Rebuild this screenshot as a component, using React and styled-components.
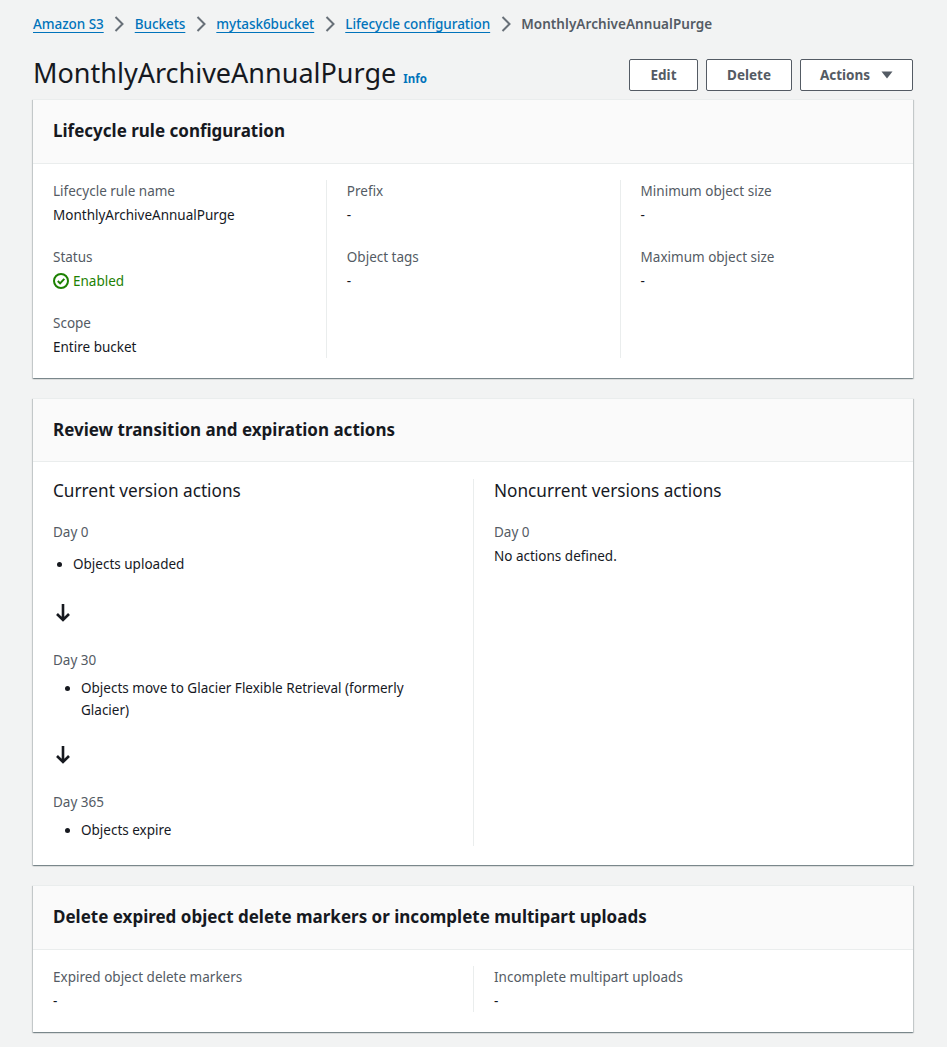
import React from 'react';
import styled, { createGlobalStyle } from 'styled-components';

const GlobalStyle = createGlobalStyle`
    * {
        box-sizing: border-box;
    }
    body {
        margin: 0;
        background: #f2f3f3;
        color: #16191f;
        font-family: "Noto Sans", "Open Sans", sans-serif;
        font-size: 13.5px;
        line-height: 22px;
    }
`;

const Chevron = () => (
    <ChevronIcon width="10" height="16" viewBox="0 0 10 16" fill="none">
        <path d="M1.5 1l7 7-7 7" stroke="#687078" strokeWidth="2" />
    </ChevronIcon>
);

const ArrowDown = () => (
    <ArrowIcon width="16" height="18" viewBox="0 0 16 18" fill="none">
        <path d="M8 0v16M2 10l6 6 6-6" stroke="#16191f" strokeWidth="2.6" />
    </ArrowIcon>
);

const CheckCircle = () => (
    <svg width="16" height="16" viewBox="0 0 16 16" fill="none">
        <circle cx="8" cy="8" r="7" stroke="#1d8102" strokeWidth="2" />
        <path d="M4.8 8l2.3 2.4 4.2-4.6" stroke="#1d8102" strokeWidth="2" />
    </svg>
);

const Field = ({ label, children }) => (
    <div>
        <Label>{label}</Label>
        <Value>{children}</Value>
    </div>
);

const App = () => {
    return (
        <Page>
            <GlobalStyle />
            <Breadcrumbs>
                <Crumb href="#">Amazon S3</Crumb>
                <Chevron />
                <Crumb href="#">Buckets</Crumb>
                <Chevron />
                <Crumb href="#">mytask6bucket</Crumb>
                <Chevron />
                <Crumb href="#">Lifecycle configuration</Crumb>
                <Chevron />
                <CurrentCrumb>MonthlyArchiveAnnualPurge</CurrentCrumb>
            </Breadcrumbs>

            <PageHeader>
                <TitleRow>
                    <Title>MonthlyArchiveAnnualPurge</Title>
                    <InfoLink href="#">Info</InfoLink>
                </TitleRow>
                <Actions>
                    <Button $width={69}>Edit</Button>
                    <Button $width={86}>Delete</Button>
                    <Button $width={113}>
                        Actions
                        <Caret width="12" height="8" viewBox="0 0 12 8">
                            <path d="M0.5 0.5h11L6 7.5z" fill="#545b64" />
                        </Caret>
                    </Button>
                </Actions>
            </PageHeader>

            <Card>
                <CardHeader>
                    <CardTitle>Lifecycle rule configuration</CardTitle>
                </CardHeader>
                <ThreeColumns>
                    <Column $divider>
                        <Field label="Lifecycle rule name">MonthlyArchiveAnnualPurge</Field>
                        <Field label="Status">
                            <StatusOk>
                                <CheckCircle />
                                Enabled
                            </StatusOk>
                        </Field>
                        <Field label="Scope">Entire bucket</Field>
                    </Column>
                    <Column $divider>
                        <Field label="Prefix">-</Field>
                        <Field label="Object tags">-</Field>
                    </Column>
                    <Column>
                        <Field label="Minimum object size">-</Field>
                        <Field label="Maximum object size">-</Field>
                    </Column>
                </ThreeColumns>
            </Card>

            <Card>
                <CardHeader $short>
                    <CardTitle>Review transition and expiration actions</CardTitle>
                </CardHeader>
                <TwoColumns $top={17} $bottom={19}>
                    <SplitColumn $divider>
                        <SectionTitle>Current version actions</SectionTitle>
                        <Label>Day 0</Label>
                        <ActionList $indent={20} $top={10} $bottom={29}>
                            <li>Objects uploaded</li>
                        </ActionList>
                        <ArrowDown />
                        <Label>Day 30</Label>
                        <ActionList $indent={28} $top={6}>
                            <li>Objects move to Glacier Flexible Retrieval (formerly Glacier)</li>
                        </ActionList>
                        <ArrowDown />
                        <Label>Day 365</Label>
                        <ActionList $indent={28} $top={6} $bottom={5}>
                            <li>Objects expire</li>
                        </ActionList>
                    </SplitColumn>
                    <SplitColumn $second>
                        <SectionTitle>Noncurrent versions actions</SectionTitle>
                        <Label>Day 0</Label>
                        <Value>No actions defined.</Value>
                    </SplitColumn>
                </TwoColumns>
            </Card>

            <Card>
                <CardHeader>
                    <CardTitle>Delete expired object delete markers or incomplete multipart uploads</CardTitle>
                </CardHeader>
                <TwoColumns $top={16} $bottom={20}>
                    <SplitColumn $divider>
                        <Label>Expired object delete markers</Label>
                        <Value>-</Value>
                    </SplitColumn>
                    <SplitColumn $second>
                        <Label>Incomplete multipart uploads</Label>
                        <Value>-</Value>
                    </SplitColumn>
                </TwoColumns>
            </Card>
        </Page>
    );
};

const Page = styled.div`
    padding: 13px 34px 15px 33px;
`;

const Breadcrumbs = styled.nav`
    display: flex;
    align-items: center;
    height: 22px;
`;

const Crumb = styled.a`
    color: #0073bb;
    font-weight: 500;
    letter-spacing: -0.05px;
    text-decoration: underline;
    text-underline-offset: 3px;
`;

const CurrentCrumb = styled.span`
    color: #545b64;
    font-weight: 600;
    letter-spacing: 0.06px;
`;

const ChevronIcon = styled.svg`
    margin: 0 10.5px;
    flex: none;
`;

const PageHeader = styled.header`
    display: flex;
    justify-content: space-between;
    align-items: flex-start;
    height: 32px;
    margin-top: 24px;
    margin-bottom: 8px;
`;

const TitleRow = styled.div`
    display: flex;
    align-items: baseline;
    gap: 7px;
`;

const Title = styled.h1`
    margin: 0;
    font-size: 27px;
    line-height: 28px;
    font-weight: 400;
    color: #16191f;
`;

const InfoLink = styled.a`
    color: #0073bb;
    font-size: 11.5px;
    font-weight: 700;
    text-decoration: none;
`;

const Actions = styled.div`
    display: flex;
    gap: 8px;
`;

const Button = styled.button`
    display: flex;
    align-items: center;
    justify-content: center;
    gap: 11px;
    width: ${(props) => props.$width}px;
    height: 32px;
    padding: 0;
    border: 1px solid #545b64;
    border-radius: 2px;
    background: #fff;
    color: #545b64;
    font-family: inherit;
    font-size: 13.5px;
    font-weight: 700;
    cursor: pointer;
`;

const Caret = styled.svg`
    flex: none;
`;

const Card = styled.section`
    background: #fff;
    margin-bottom: 20px;
    box-shadow: 0 1px 1px 0 rgba(0, 28, 36, 0.3), 1px 1px 1px 0 rgba(0, 28, 36, 0.15), -1px 1px 1px 0 rgba(0, 28, 36, 0.15);
    border-top: 1px solid #eaeded;

    &:last-child {
        margin-bottom: 0;
    }
`;

const CardHeader = styled.div`
    display: flex;
    align-items: center;
    height: ${(props) => (props.$short ? 63 : 64)}px;
    padding: 0 20px ${(props) => (props.$short ? 0 : 2)}px;
    background: #fafafa;
    border-bottom: 1px solid #eaeded;
`;

const CardTitle = styled.h2`
    margin: 0;
    font-size: 17px;
    line-height: 22px;
    font-weight: 700;
    color: #16191f;
`;

const ThreeColumns = styled.div`
    display: grid;
    grid-template-columns: 273.8px 273.8px 1fr;
    column-gap: 20px;
    padding: 16px 0 20px 20px;
`;

const Column = styled.div`
    display: flex;
    flex-direction: column;
    gap: 20px;
    border-right: ${(props) => (props.$divider ? '1px solid #eaeded' : 'none')};
`;

const TwoColumns = styled.div`
    display: grid;
    grid-template-columns: 421px 1fr;
    padding: ${(props) => props.$top}px 20px ${(props) => props.$bottom}px;
`;

const SplitColumn = styled.div`
    border-right: ${(props) => (props.$divider ? '1px solid #eaeded' : 'none')};
    padding-left: ${(props) => (props.$second ? 20 : 0)}px;
    padding-right: 20px;
`;

const SectionTitle = styled.h3`
    margin: 1px 0 19px;
    font-size: 17.2px;
    line-height: 22px;
    font-weight: 400;
    color: #16191f;
`;

const Label = styled.div`
    color: #545b64;
    margin-bottom: 2px;
`;

const Value = styled.div`
    color: #16191f;
`;

const StatusOk = styled.div`
    display: flex;
    align-items: center;
    gap: 4px;
    color: #1d8102;
`;

const ActionList = styled.ul`
    margin: ${(props) => props.$top}px 0 ${(props) => props.$bottom || 0}px;
    padding-left: ${(props) => props.$indent}px;
`;

const ArrowIcon = styled.svg`
    display: block;
    margin: 25px 0 27px 2px;
`;

export default App;
